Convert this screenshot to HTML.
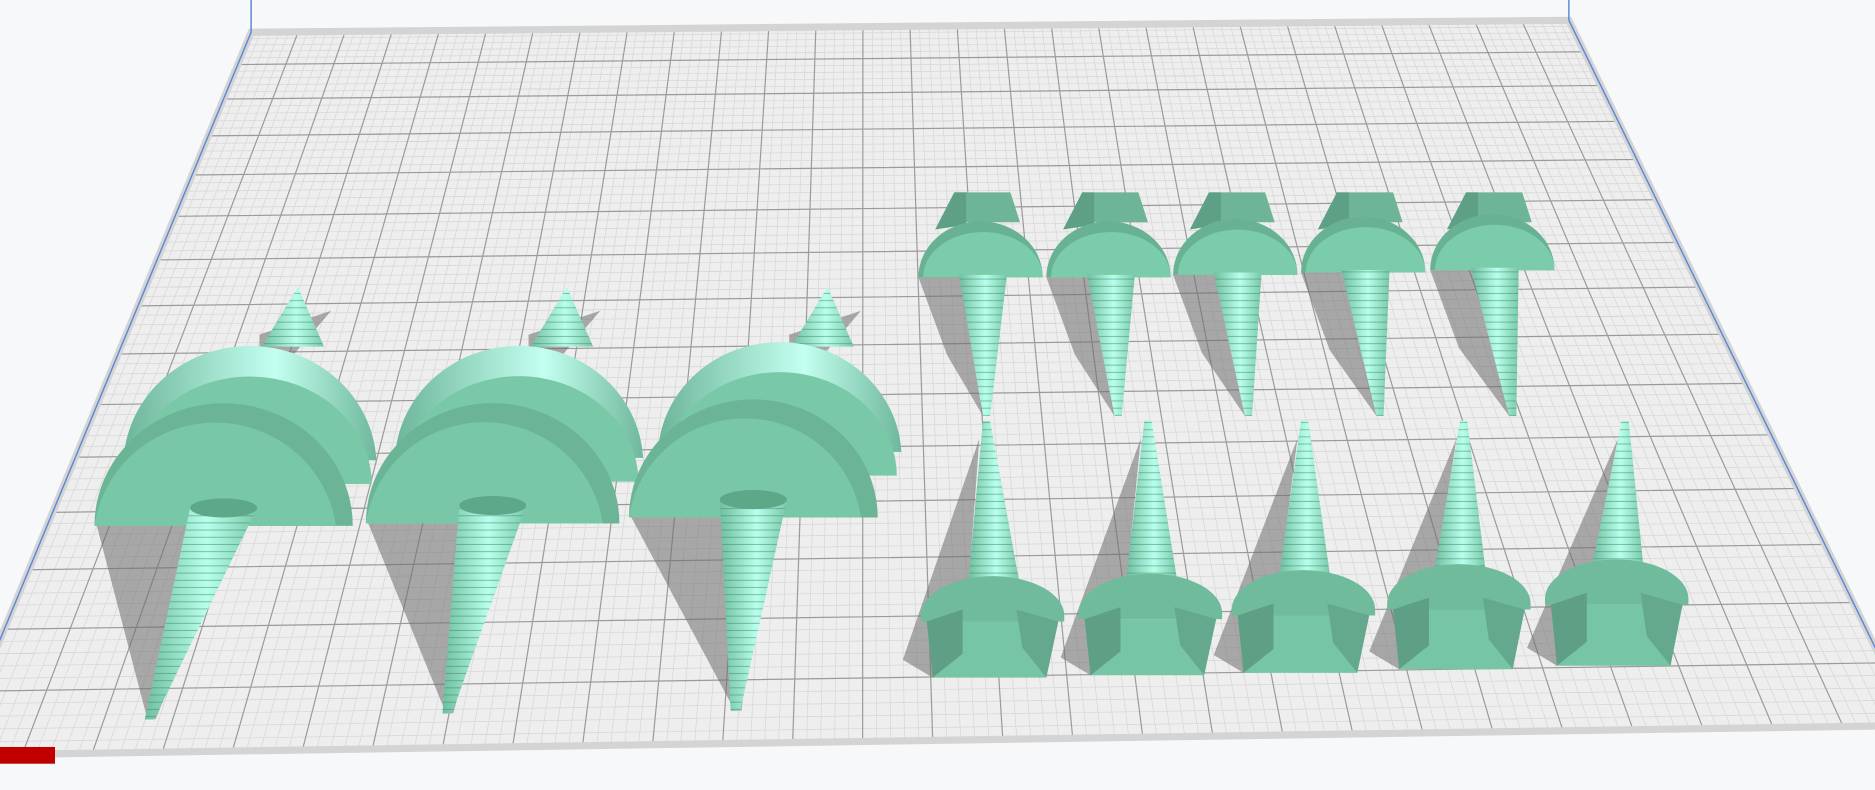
<!DOCTYPE html>
<html><head><meta charset="utf-8"><style>
html,body{margin:0;padding:0;background:#f7f8f9;overflow:hidden}
svg{display:block}
</style></head><body>
<svg id="s" width="1875" height="790" viewBox="0 0 1568 661" preserveAspectRatio="none" xmlns="http://www.w3.org/2000/svg">
<defs>
<linearGradient id="thr" x1="0" x2="1" y1="0" y2="0">
<stop offset="0" stop-color="#6fbf9f"/><stop offset="0.55" stop-color="#b8ffec"/><stop offset="1" stop-color="#78c9a8"/>
</linearGradient>
<linearGradient id="rim" x1="0" x2="1" y1="0" y2="0">
<stop offset="0" stop-color="#6db59a"/><stop offset="0.6" stop-color="#c4fff0"/><stop offset="1" stop-color="#6fb89c"/>
</linearGradient>
<pattern id="rings" width="10" height="6" patternUnits="userSpaceOnUse">
<line x1="0" y1="5.5" x2="10" y2="5.5" stroke="#3f7f66" stroke-width="0.7" opacity="0.6"/>
</pattern>
</defs>
<g id="plate"></g>
<g id="objs"></g>
<rect x="0" y="625" width="46" height="14" fill="#c00000"/>
</svg>
<script>
var NS="http://www.w3.org/2000/svg";
function el(p,t,a){var e=document.createElementNS(NS,t);for(var k in a)e.setAttribute(k,a[k]);p.appendChild(e);return e;}
var P=document.getElementById('plate'),O=document.getElementById('objs');
var TL=[210,27],TR=[1312,17],BR=[1600,607],BL=[-40,632];
el(P,'polygon',{points:"210,27 1312,17 1600,607 -40,632",fill:"#eeeeee"});
function lerp(a,b,t){return [a[0]+(b[0]-a[0])*t,a[1]+(b[1]-a[1])*t];}
var cols=28,rows=15;
function rowT(v){var k=0.55;return (v*(1+k*v))/(1+k);}
var mi="",ma="";
for(var i=0;i<=cols*5;i++){var u=i/(cols*5);var a=lerp(TL,TR,u),b=lerp(BL,BR,u);
 var s="M"+a[0].toFixed(1)+" "+a[1].toFixed(1)+"L"+b[0].toFixed(1)+" "+b[1].toFixed(1);
 if(i%5==0)ma+=s;else mi+=s;}
for(var j=0;j<=rows*5;j++){var t=rowT(j/(rows*5));var a=lerp(TL,BL,t),b=lerp(TR,BR,t);
 var s="M"+a[0].toFixed(1)+" "+a[1].toFixed(1)+"L"+b[0].toFixed(1)+" "+b[1].toFixed(1);
 if(j%5==0)ma+=s;else mi+=s;}
el(P,'path',{d:mi,stroke:"#d6d6d6","stroke-width":"0.6",fill:"none"});
el(P,'path',{d:ma,stroke:"#9a9a9a","stroke-width":"1",fill:"none"});
el(P,'polygon',{points:"210,27 1312,17 1600,607 -40,632",fill:"none",stroke:"#d4d4d4","stroke-width":"6"});
el(P,'path',{d:"M210,0L210,27L-40,632M1312,0L1312,17L1600,607",stroke:"#5b87d6","stroke-width":"1.2",fill:"none"});

var sh="rgba(110,110,110,0.55)";
[[187,440,108],[412,438,106],[630,433,104]].forEach(function(c){
 var x=c[0],y=c[1],r=c[2];
 var tip=[x-62,602];
 if(x>400)tip=[x-38,597];if(x>600)tip=[x-15,595];
 el(O,'polygon',{points:(x-r+2)+","+y+" "+(x+10)+","+y+" "+(tip[0]+5)+","+tip[1]+" "+(tip[0]-3)+","+(tip[1]-5),fill:sh});
 el(O,'polygon',{points:(x+30)+",280 "+(x+90)+",260 "+(x+30)+",330",fill:sh});
 var tx=x+62;
 el(O,'polygon',{points:(tx-30)+",290 "+tx+",240 "+(tx+22)+",290",fill:"url(#thr)"});
 el(O,'polygon',{points:(tx-30)+",290 "+tx+",240 "+(tx+22)+",290",fill:"url(#rings)"});
 var bx=x+22,by=y-55,br=r*0.98;
 el(O,'path',{d:"M"+(bx-br)+","+(by+5)+"A"+br+","+(br*0.95)+" 0 0 1 "+(bx+br)+","+(by+5)+"L"+(bx+br)+","+by+"Z",fill:"url(#rim)"});
 el(O,'path',{d:"M"+(bx-br+4)+","+(by+20)+"A"+(br-4)+","+(br*0.85)+" 0 0 1 "+(bx+br-4)+","+(by+20)+"Z",fill:"#79c9a8"});
 el(O,'path',{d:"M"+(x-r)+","+y+"A"+r+","+(r*0.95)+" 0 0 1 "+(x+r)+","+y+"Z",fill:"#6bb596"});
 el(O,'path',{d:"M"+(x-r)+","+y+"A"+(r-6)+","+(r*0.93)+" 0 0 1 "+(x+r-14)+","+y+"Z",fill:"#78c8a7"});
 var w=28;
 el(O,'polygon',{points:(x-w)+","+(y-15)+" "+(x+w)+","+(y-15)+" "+(tip[0]+4)+","+tip[1]+" "+(tip[0]-4)+","+tip[1],fill:"url(#thr)"});
 el(O,'polygon',{points:(x-w)+","+(y-15)+" "+(x+w)+","+(y-15)+" "+(tip[0]+4)+","+tip[1]+" "+(tip[0]-4)+","+tip[1],fill:"url(#rings)"});
 el(O,'ellipse',{cx:x,cy:y-15,rx:w,ry:8,fill:"#5ea88a"});
});
[[820,232],[927,232],[1033,230],[1140,228],[1248,226]].forEach(function(c,i){
 var x=c[0],y=c[1],r=52,tip=[x+5+i*3,348];
 el(O,'polygon',{points:(x-r)+","+y+" "+(x-5)+","+y+" "+(tip[0]-3)+","+tip[1]+" "+(x-28)+","+(y+65),fill:sh});
 el(O,'polygon',{points:(x-22)+",161 "+(x+25)+",161 "+(x+33)+",186 "+(x-34)+",186",fill:"#6db596"});
 el(O,'polygon',{points:(x-22)+",161 "+(x-12)+",161 "+(x-12)+",188 "+(x-38)+",192",fill:"#5ea086"});
 el(O,'path',{d:"M"+(x-r)+","+y+"A"+r+","+(r*0.9)+" 0 0 1 "+(x+r)+","+y+"Z",fill:"#68b293"});
 el(O,'path',{d:"M"+(x-r+4)+","+y+"A"+(r-4)+","+(r*0.7)+" 0 0 1 "+(x+r)+","+y+"Z",fill:"#7accab"});
 el(O,'polygon',{points:(x-18)+","+(y-2)+" "+(x+22)+","+(y-2)+" "+(tip[0]+3)+","+tip[1]+" "+(tip[0]-3)+","+tip[1],fill:"url(#thr)"});
 el(O,'polygon',{points:(x-18)+","+(y-2)+" "+(x+22)+","+(y-2)+" "+(tip[0]+3)+","+tip[1]+" "+(tip[0]-3)+","+tip[1],fill:"url(#rings)"});
});
[[830,490,567],[962,488,565],[1090,485,563],[1220,480,560],[1352,476,557]].forEach(function(c,i){
 var x=c[0],y=c[1],yb=c[2],r=60,tip=[x-5+i*3,352];
 el(O,'polygon',{points:(x-r+10)+","+yb+" "+(x-r-15)+","+(yb-15)+" "+(tip[0]-6)+","+(tip[1]+15)+" "+(x-20)+","+y,fill:sh});
 el(O,'polygon',{points:(x-20)+","+(y-5)+" "+(x+22)+","+(y-5)+" "+(tip[0]+3)+","+tip[1]+" "+(tip[0]-3)+","+tip[1],fill:"url(#thr)"});
 el(O,'polygon',{points:(x-20)+","+(y-5)+" "+(x+22)+","+(y-5)+" "+(tip[0]+3)+","+tip[1]+" "+(tip[0]-3)+","+tip[1],fill:"url(#rings)"});
 el(O,'path',{d:"M"+(x-r)+","+(y+25)+"A"+r+","+(r*0.55)+" 0 0 1 "+(x+r)+","+(y+25)+"L"+(x+r)+","+(y+30)+"L"+(x-r)+","+(y+30)+"Z",fill:"#6fbb9c"});
 el(O,'polygon',{points:(x-r+5)+","+(y+30)+" "+(x+r-5)+","+(y+30)+" "+(x+r-15)+","+yb+" "+(x-r+10)+","+yb,fill:"#76c6a5"});
 el(O,'polygon',{points:(x-r+5)+","+(y+30)+" "+(x-25)+","+(y+20)+" "+(x-25)+","+(yb-20)+" "+(x-r+10)+","+yb,fill:"#5e9f85"});
 el(O,'polygon',{points:(x+r-5)+","+(y+30)+" "+(x+20)+","+(y+20)+" "+(x+25)+","+(yb-25)+" "+(x+r-15)+","+yb,fill:"#64a98d"});
});
</script>
</body></html>
